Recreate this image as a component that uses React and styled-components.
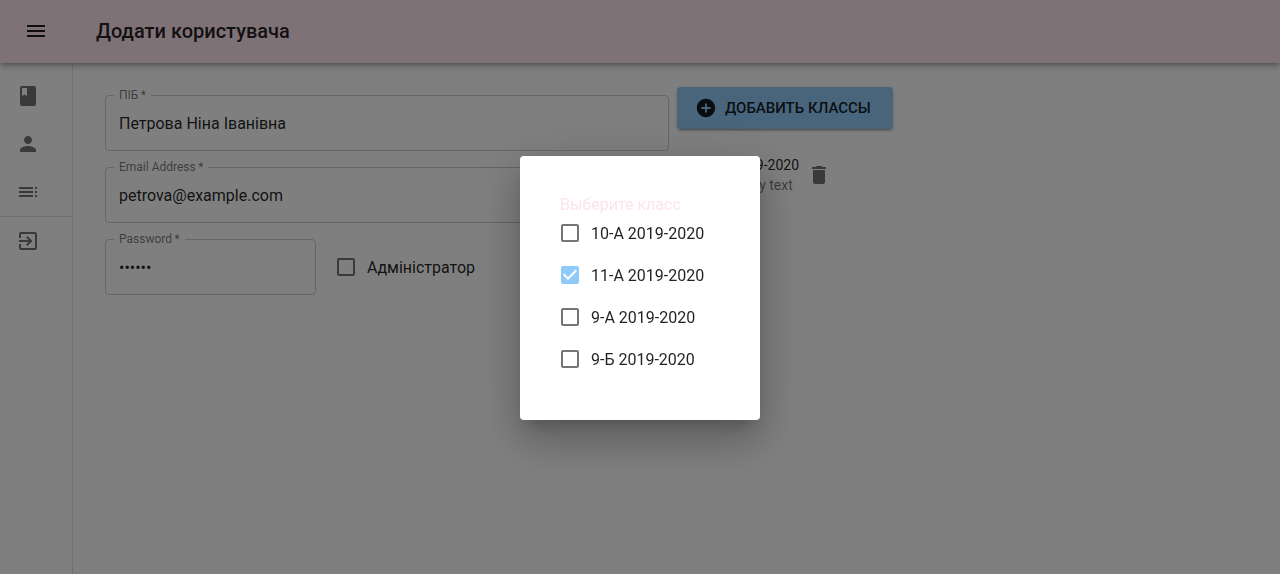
import React from "react";
import styled, { createGlobalStyle } from "styled-components";

const GlobalStyle = createGlobalStyle`
  *, *::before, *::after { box-sizing: border-box; }
  body {
    margin: 0;
    background: #fff;
    color: rgba(0, 0, 0, 0.87);
    font-family: Roboto, "Liberation Sans", sans-serif;
    font-size: 16px;
    overflow: hidden;
  }
`;

const PATHS = {
  menu: "M3 18h18v-2H3v2zm0-5h18v-2H3v2zm0-7v2h18V6H3z",
  book: "M18 2H6c-1.1 0-2 .9-2 2v16c0 1.1.9 2 2 2h12c1.1 0 2-.9 2-2V4c0-1.1-.9-2-2-2zM6 4h5v8l-2.5-1.5L6 12V4z",
  person:
    "M12 12c2.21 0 4-1.79 4-4s-1.79-4-4-4-4 1.79-4 4 1.79 4 4 4zm0 2c-2.67 0-8 1.34-8 4v2h16v-2c0-2.66-5.33-4-8-4z",
  toc: "M3 9h14V7H3v2zm0 4h14v-2H3v2zm0 4h14v-2H3v2zm16 0h2v-2h-2v2zm0-10v2h2V7h-2zm0 6h2v-2h-2v2z",
  exit: "M10.09 15.59L11.5 17l5-5-5-5-1.41 1.41L12.67 11H3v2h9.67l-2.58 2.59zM19 3H5c-1.11 0-2 .9-2 2v4h2V5h14v14H5v-4H3v4c0 1.1.89 2 2 2h14c1.1 0 2-.9 2-2V5c0-1.1-.9-2-2-2z",
  add: "M12 2C6.48 2 2 6.48 2 12s4.48 10 10 10 10-4.48 10-10S17.52 2 12 2zm5 11h-4v4h-2v-4H7v-2h4V7h2v4h4v2z",
  remove: "M6 19c0 1.1.9 2 2 2h8c1.1 0 2-.9 2-2V7H6v12zM19 4h-3.5l-1-1h-5l-1 1H5v2h14V4z",
  unchecked:
    "M19 5v14H5V5h14m0-2H5c-1.1 0-2 .9-2 2v14c0 1.1.9 2 2 2h14c1.1 0 2-.9 2-2V5c0-1.1-.9-2-2-2z",
  checked:
    "M19 3H5c-1.11 0-2 .9-2 2v14c0 1.1.89 2 2 2h14c1.11 0 2-.9 2-2V5c0-1.1-.89-2-2-2zm-9 14l-5-5 1.41-1.41L10 14.17l7.59-7.59L19 8l-9 9z",
};

const Svg = styled.svg`
  display: block;
  flex: none;
  fill: currentColor;
  width: ${(p) => p.$size}px;
  height: ${(p) => p.$size}px;
`;

const Icon = ({ name, size = 24 }) => (
  <Svg $size={size} viewBox="0 0 24 24" aria-hidden="true">
    <path d={PATHS[name]} />
  </Svg>
);

const Page = styled.div`
  display: flex;
  flex-direction: column;
  height: 574px;
`;

const AppBar = styled.header`
  position: relative;
  z-index: 2;
  flex: none;
  display: flex;
  align-items: center;
  gap: 48px;
  height: 63px;
  padding: 0 24px 1px;
  background: #fce4ec;
  box-shadow: 0 2px 4px -1px rgba(0, 0, 0, 0.2), 0 4px 5px 0 rgba(0, 0, 0, 0.14),
    0 1px 10px 0 rgba(0, 0, 0, 0.12);
`;

const Title = styled.h1`
  margin: 0;
  font-size: 20px;
  font-weight: 500;
  line-height: 32px;
`;

const Body = styled.div`
  flex: 1;
  display: flex;
  min-height: 0;
`;

const Drawer = styled.nav`
  width: 73px;
  padding-top: 9px;
  border-right: 1px solid rgba(0, 0, 0, 0.12);
  color: rgba(0, 0, 0, 0.54);
`;

const NavItem = styled.div`
  display: flex;
  align-items: center;
  height: 48px;
  padding: 0 16px;
`;

const Divider = styled.hr`
  height: 1px;
  margin: 0;
  border: 0;
  background: rgba(0, 0, 0, 0.12);
`;

const Main = styled.main`
  flex: 1;
  display: flex;
  align-items: flex-start;
  gap: 8px;
  padding: 24px 32px;
`;

const Form = styled.form`
  display: flex;
  flex-direction: column;
  gap: 11px;
  width: 564px;
  padding-top: 3px;
`;

const FormRow = styled.div`
  display: flex;
  gap: 19px;
`;

const Outline = styled.fieldset`
  width: ${(p) => p.$width || "100%"};
  height: 61px;
  min-width: 0;
  margin: 0;
  padding: 0 13px;
  border: 1px solid rgba(0, 0, 0, 0.2);
  border-radius: 4px;
`;

const Legend = styled.legend`
  height: 11px;
  margin-left: -5px;
  padding: 0 5px;
  font-size: 12px;
  line-height: 11px;
  color: rgba(0, 0, 0, 0.54);
`;

const Input = styled.input`
  display: block;
  width: 100%;
  height: 19px;
  margin-top: 13px;
  padding: 0;
  border: 0;
  outline: 0;
  background: none;
  color: inherit;
  font: inherit;
`;

const Field = ({ label, width, ...input }) => (
  <Outline $width={width}>
    <Legend>{label}{"\u2009*"}</Legend>
    <Input readOnly {...input} />
  </Outline>
);

const CheckLabel = styled.label`
  display: flex;
  align-items: center;
  gap: 9px;
  height: 42px;
  margin-left: -2px;
  white-space: nowrap;
`;

const CheckMark = styled.span`
  color: ${(p) => (p.$on ? "#90caf9" : "rgba(0, 0, 0, 0.54)")};
`;

const CheckText = styled.span`
  padding-top: 2px;
  line-height: 24px;
`;

const AdminSlot = styled.div`
  padding: 12px 0 0 1px;
`;

const Check = ({ on, children }) => (
  <CheckLabel>
    <CheckMark $on={on}>
      <Icon name={on ? "checked" : "unchecked"} />
    </CheckMark>
    <CheckText>{children}</CheckText>
  </CheckLabel>
);

const Classes = styled.section`
  display: flex;
  flex-direction: column;
  align-items: flex-start;
`;

const AddButton = styled.button`
  display: flex;
  align-items: center;
  gap: 8px;
  height: 42.25px;
  padding: 0 22px 0 18px;
  border: 0;
  border-radius: 4px;
  background: #90caf9;
  color: rgba(0, 0, 0, 0.87);
  font: 500 15px/26px Roboto, "Liberation Sans", sans-serif;
  text-transform: uppercase;
  white-space: nowrap;
  box-shadow: 0 3px 1px -2px rgba(0, 0, 0, 0.2), 0 2px 2px 0 rgba(0, 0, 0, 0.14),
    0 1px 5px 0 rgba(0, 0, 0, 0.12);
`;

const ClassItem = styled.div`
  display: flex;
  align-items: center;
  gap: 8px;
  margin-top: 26px;
  padding-left: 23px;
`;

const ClassText = styled.div`
  font-size: 14px;
  line-height: 20px;
`;

const Secondary = styled.div`
  color: rgba(0, 0, 0, 0.54);
`;

const DeleteButton = styled.span`
  color: rgba(0, 0, 0, 0.54);
`;

const Backdrop = styled.div`
  position: fixed;
  inset: 0;
  z-index: 10;
  display: flex;
  align-items: flex-start;
  justify-content: center;
  padding-top: 156px;
  background: rgba(0, 0, 0, 0.5);
`;

const Dialog = styled.div`
  width: 240px;
  height: 264px;
  padding: 40px;
  border-radius: 4px;
  background: #fff;
  box-shadow: 0 11px 15px -7px rgba(0, 0, 0, 0.2), 0 24px 38px 3px rgba(0, 0, 0, 0.14),
    0 9px 46px 8px rgba(0, 0, 0, 0.12);
`;

const DialogTitle = styled.div`
  height: 16px;
  line-height: 18px;
  color: #fce4ec;
`;

const OPTIONS = [
  ["10-А 2019-2020", false],
  ["11-А 2019-2020", true],
  ["9-А 2019-2020", false],
  ["9-Б 2019-2020", false],
];

export default function App() {
  return (
    <>
      <GlobalStyle />
      <Page>
        <AppBar>
          <Icon name="menu" />
          <Title>Додати користувача</Title>
        </AppBar>
        <Body>
          <Drawer>
            <NavItem><Icon name="book" /></NavItem>
            <NavItem><Icon name="person" /></NavItem>
            <NavItem><Icon name="toc" /></NavItem>
            <Divider />
            <NavItem><Icon name="exit" /></NavItem>
          </Drawer>
          <Main>
            <Form>
              <Field label="ПІБ" defaultValue="Петрова Ніна Іванівна" />
              <Field label="Email Address" defaultValue="petrova@example.com" />
              <FormRow>
                <Field label="Password" width="211px" type="password" defaultValue="secret" />
                <AdminSlot>
                  <Check>Адміністратор</Check>
                </AdminSlot>
              </FormRow>
            </Form>
            <Classes>
              <AddButton type="button">
                <Icon name="add" size={22} />
                Добавить классы
              </AddButton>
              <ClassItem>
                <ClassText>
                  <div>11-А 2019-2020</div>
                  <Secondary>Secondary text</Secondary>
                </ClassText>
                <DeleteButton><Icon name="remove" /></DeleteButton>
              </ClassItem>
            </Classes>
          </Main>
        </Body>
      </Page>
      <Backdrop>
        <Dialog role="dialog">
          <DialogTitle>Выберите класс</DialogTitle>
          {OPTIONS.map(([name, on]) => (
            <Check key={name} on={on}>{name}</Check>
          ))}
        </Dialog>
      </Backdrop>
    </>
  );
}
